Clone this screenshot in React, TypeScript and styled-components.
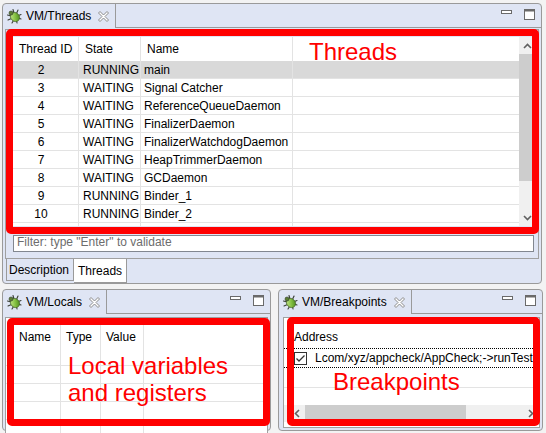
import React from "react";
import styled, { createGlobalStyle } from "styled-components";

const C = {
  lav: "#dfe5f4",
  border: "#a0a0a0",
  outer: "#9a9a9a",
  grid: "#e3e3e3",
  red: "#ff0000",
  scroll: "#f0f0f0",
  thumb: "#cdcdcd",
};

const GlobalStyle = createGlobalStyle`
  *, *::before, *::after { box-sizing: border-box; }
  html, body { margin: 0; padding: 0; }
  body {
    background: #f3f3f3;
    font-family: "Liberation Sans", Arial, sans-serif;
    font-size: 12px;
    color: #000;
  }
`;

const Page = styled.div`
  width: 546px;
  height: 433px;
  padding: 3px 3px 2px 2px;
  display: flex;
  flex-direction: column;
  gap: 5px;
  overflow: hidden;
`;

const BottomRow = styled.div`
  display: flex;
  gap: 7px;
`;

const Panel = styled.section<{ $width?: number; $height: number }>`
  position: relative;
  display: flex;
  flex-direction: column;
  height: ${(p) => p.$height}px;
  ${(p) => (p.$width ? `width: ${p.$width}px; flex: none;` : `flex: 1; min-width: 0;`)}
  background: ${C.lav};
  border: 1px solid ${C.outer};
  border-radius: 4px;
`;

const Header = styled.header`
  display: flex;
  height: 24px;
  flex: none;
`;

const Tab = styled.div`
  display: flex;
  align-items: center;
  padding: 0 6px 0 3px;
  border-right: 1px solid ${C.outer};
  border-top-left-radius: 3px;
  white-space: nowrap;
`;

const TabTitle = styled.span`
  margin: 0 7px 0 4px;
`;

const HeaderFill = styled.div`
  flex: 1;
  display: flex;
  justify-content: flex-end;
  align-items: flex-start;
  gap: 12px;
  padding: 5px 6px 0 0;
  border-bottom: 1px solid ${C.outer};
`;

const MinIcon = styled.svg`
  margin-top: 1px;
`;

const TopBody = styled.div`
  flex: 1;
  display: flex;
  flex-direction: column;
  padding-top: 1px;
`;

const ThreadsBox = styled.div`
  height: 230px;
  flex: none;
  margin: 0 2px;
  border: 1px solid ${C.border};
  background: ${C.lav};
  padding: 7px 2px 6px 0;
  display: flex;
  flex-direction: column;
`;

const TableArea = styled.div<{ $h: number }>`
  height: ${(p) => p.$h}px;
  flex: none;
  display: flex;
  background: #fff;
  overflow: hidden;
`;

const Grid = styled.div`
  flex: 1;
  min-width: 0;
  display: flex;
  flex-direction: column;
  overflow: hidden;
  background: #fff;
`;

const GridRow = styled.div<{ $cols: string; $h: number; $selected?: boolean; $line?: boolean }>`
  display: grid;
  grid-template-columns: ${(p) => p.$cols};
  height: ${(p) => p.$h}px;
  flex: none;
  background: ${(p) => (p.$selected ? "#d9d9d9" : "#fff")};
  border-bottom: ${(p) => (p.$line ? `1px solid ${C.grid}` : "none")};
`;

const Cell = styled.div<{ $center?: boolean; $pad?: number; $last?: boolean }>`
  display: flex;
  align-items: center;
  justify-content: ${(p) => (p.$center ? "center" : "flex-start")};
  padding-left: ${(p) => (p.$center ? 0 : p.$pad ?? 4)}px;
  padding-right: ${(p) => (p.$center ? 2 : 0)}px;
  border-right: ${(p) => (p.$last ? "none" : `1px solid ${C.grid}`)};
  white-space: nowrap;
  overflow: hidden;
`;

const VScroll = styled.div`
  width: 17px;
  flex: none;
  display: flex;
  flex-direction: column;
  background: ${C.scroll};
`;

const ScrollBtn = styled.div<{ $w?: number; $end?: boolean }>`
  flex: none;
  width: ${(p) => p.$w ?? 17}px;
  height: 17px;
  display: flex;
  align-items: center;
  justify-content: ${(p) => (p.$end ? "flex-end" : "center")};
  padding-right: ${(p) => (p.$end ? 5 : 0)}px;
`;

const VTrack = styled.div`
  flex: 1;
`;

const VThumb = styled.div`
  height: 127px;
  background: ${C.thumb};
`;

const Filter = styled.div`
  height: 17px;
  flex: none;
  margin: 9px 2px 0 7px;
  border: 1px solid #828790;
  background: #fff;
  color: #6d6d6d;
  padding: 0 0 4px 3px;
  display: flex;
  align-items: center;
  white-space: nowrap;
`;

const TabStrip = styled.div`
  height: 24px;
  flex: none;
  display: flex;
  align-items: flex-start;
  padding-left: 3px;
`;

const BottomTab = styled.div<{ $active?: boolean }>`
  height: ${(p) => (p.$active ? 24 : 22)}px;
  display: flex;
  align-items: center;
  padding: 0 4px 0 ${(p) => (p.$active ? 4 : 2)}px;
  background: ${(p) => (p.$active ? "#fff" : C.lav)};
  border: 1px solid ${C.outer};
  border-top: none;
  ${(p) => (p.$active ? "border-left: none;" : "")}
`;

const SmallBody = styled.div<{ $left: number }>`
  flex: 1;
  display: flex;
  flex-direction: column;
  padding: 3px 2px 2px ${(p) => p.$left}px;
`;

const WhiteBox = styled.div`
  flex: 1;
  display: flex;
  flex-direction: column;
  border: 1px solid ${C.border};
  background: #fff;
  padding-top: 7px;
  overflow: hidden;
`;

const PlainRow = styled.div<{ $dotted?: boolean; $line?: boolean }>`
  height: 20px;
  flex: none;
  display: flex;
  align-items: center;
  gap: 8px;
  padding-left: 10px;
  white-space: nowrap;
  overflow: hidden;
  border-top: ${(p) => (p.$dotted ? "1px dotted #000" : "none")};
  border-bottom: ${(p) => (p.$dotted ? "1px dotted #000" : p.$line ? `1px solid ${C.grid}` : "none")};
`;

const HeaderRow = styled.div`
  height: 23px;
  flex: none;
  display: flex;
  align-items: center;
  padding-left: 10px;
`;

const Spacer = styled.div`
  flex: 1;
`;

const HScroll = styled.div`
  height: 17px;
  flex: none;
  margin-bottom: 5px;
  display: flex;
  background: ${C.scroll};
`;

const HThumb = styled.div`
  width: 161px;
  background: ${C.thumb};
`;

const HTrack = styled.div`
  flex: 1;
`;

const Check = styled.svg`
  flex: none;
`;

const Callout = styled.div<{ $l: number; $t: number; $w: number; $h: number; $pl: number; $pt: number }>`
  position: absolute;
  left: ${(p) => p.$l}px;
  top: ${(p) => p.$t}px;
  width: ${(p) => p.$w}px;
  height: ${(p) => p.$h}px;
  border: 7px solid ${C.red};
  border-radius: 5px;
  padding: ${(p) => p.$pt}px 0 0 ${(p) => p.$pl}px;
  pointer-events: none;
`;

const CalloutLabel = styled.div`
  color: ${C.red};
  font-family: "Liberation Sans", Arial, sans-serif;
  font-size: 24px;
  line-height: 27px;
  white-space: nowrap;
`;

const BugIcon = () => (
  <svg width="16" height="16" viewBox="0 0 16 16" aria-hidden="true">
    <defs>
      <linearGradient id="bugG" x1="0" y1="0" x2="1" y2="1">
        <stop offset="0" stopColor="#d4f09a" />
        <stop offset="0.55" stopColor="#80bd3e" />
        <stop offset="1" stopColor="#3e7a1c" />
      </linearGradient>
    </defs>
    <g stroke="#3a3f36" strokeWidth="1.1" strokeLinecap="round" fill="none">
      <path d="M5 8 L1.5 7" />
      <path d="M5.5 10.5 L2 12" />
      <path d="M7.5 12.5 L6 15" />
      <path d="M8 5 L7 1.5" />
      <path d="M10.5 5.5 L12 2" />
      <path d="M12.5 7.5 L15 6.5" />
      <path d="M12.5 10 L15 11" />
      <path d="M10.5 12.5 L11 15" />
    </g>
    <ellipse cx="9" cy="9" rx="4.2" ry="4.9" transform="rotate(-45 9 9)" fill="url(#bugG)" stroke="#4a6b2a" strokeWidth="0.8" />
    <circle cx="5" cy="5" r="2" fill="#5c7d33" stroke="#2f3a28" strokeWidth="0.6" />
  </svg>
);

const CloseIcon = () => (
  <svg width="11" height="11" viewBox="0 0 11 11" aria-hidden="true">
    <path
      d="M0.5 2 L2 0.5 L5.5 4 L9 0.5 L10.5 2 L7 5.5 L10.5 9 L9 10.5 L5.5 7 L2 10.5 L0.5 9 L4 5.5 Z"
      fill="#fff"
      stroke="#8a8a8a"
      strokeWidth="1"
      strokeLinejoin="miter"
    />
  </svg>
);

const Controls = () => (
  <>
    <MinIcon width="11" height="4" viewBox="0 0 11 4" aria-hidden="true">
      <rect x="0.5" y="0.5" width="10" height="3" fill="#fff" stroke="#6a6a6a" />
    </MinIcon>
    <svg width="11" height="11" viewBox="0 0 11 11" aria-hidden="true">
      <rect x="0.5" y="0.5" width="10" height="10" fill="#fff" stroke="#6a6a6a" />
      <rect x="0.5" y="0.5" width="10" height="2" fill="#6a6a6a" />
    </svg>
  </>
);

const Chevron = ({ dir }: { dir: "up" | "down" | "left" | "right" }) => {
  const pts =
    dir === "up"
      ? "1,5 4.5,1.5 8,5"
      : dir === "down"
      ? "1,1 4.5,4.5 8,1"
      : dir === "left"
      ? "5,1 1.5,4.5 5,8"
      : "1,1 4.5,4.5 1,8";
  const w = dir === "up" || dir === "down" ? 9 : 6;
  const h = dir === "up" || dir === "down" ? 6 : 9;
  return (
    <svg width={w} height={h} viewBox={`0 0 ${w} ${h}`} aria-hidden="true">
      <polyline points={pts} fill="none" stroke="#606060" strokeWidth="1.6" />
    </svg>
  );
};

const PanelHeader = ({ title }: { title: string }) => (
  <Header>
    <Tab>
      <BugIcon />
      <TabTitle>{title}</TabTitle>
      <CloseIcon />
    </Tab>
    <HeaderFill>
      <Controls />
    </HeaderFill>
  </Header>
);

const threads: [string, string, string][] = [
  ["2", "RUNNING", "main"],
  ["3", "WAITING", "Signal Catcher"],
  ["4", "WAITING", "ReferenceQueueDaemon"],
  ["5", "WAITING", "FinalizerDaemon"],
  ["6", "WAITING", "FinalizerWatchdogDaemon"],
  ["7", "WAITING", "HeapTrimmerDaemon"],
  ["8", "WAITING", "GCDaemon"],
  ["9", "RUNNING", "Binder_1"],
  ["10", "RUNNING", "Binder_2"],
  ["", "", ""],
];

const TCOLS = "73px 62px 152px 1fr";
const LCOLS = "55px 40px 43px 1fr";

export default function App() {
  return (
    <>
      <GlobalStyle />
      <Page>
        <Panel $width={540} $height={281}>
          <PanelHeader title="VM/Threads" />
          <TopBody>
            <ThreadsBox>
              <TableArea $h={189}>
                <Grid>
                  <GridRow $cols={TCOLS} $h={24}>
                    <Cell $pad={13}>Thread ID</Cell>
                    <Cell $pad={6}>State</Cell>
                    <Cell $pad={6}>Name</Cell>
                    <Cell $last />
                  </GridRow>
                  {threads.map(([id, state, name], i) => (
                    <GridRow key={i} $cols={TCOLS} $h={18} $line $selected={i === 0}>
                      <Cell $center>{id}</Cell>
                      <Cell $pad={4}>{state}</Cell>
                      <Cell $pad={3}>{name}</Cell>
                      <Cell $last />
                    </GridRow>
                  ))}
                </Grid>
                <VScroll>
                  <ScrollBtn>
                    <Chevron dir="up" />
                  </ScrollBtn>
                  <VThumb />
                  <VTrack />
                  <ScrollBtn>
                    <Chevron dir="down" />
                  </ScrollBtn>
                </VScroll>
              </TableArea>
              <Filter>Filter: type "Enter" to validate</Filter>
            </ThreadsBox>
            <TabStrip>
              <BottomTab>Description</BottomTab>
              <BottomTab $active>Threads</BottomTab>
            </TabStrip>
          </TopBody>
          <Callout $l={3} $t={25} $w={533} $h={205} $pl={296} $pt={2}>
            <CalloutLabel>Threads</CalloutLabel>
          </Callout>
        </Panel>

        <BottomRow>
          <Panel $width={269} $height={142}>
            <PanelHeader title="VM/Locals" />
            <SmallBody $left={2}>
              <WhiteBox>
                <GridRow $cols={LCOLS} $h={23}>
                  <Cell $pad={13}>Name</Cell>
                  <Cell $pad={5}>Type</Cell>
                  <Cell $pad={5}>Value</Cell>
                  <Cell $last />
                </GridRow>
                {[0, 1, 2, 3, 4].map((i) => (
                  <GridRow key={i} $cols={LCOLS} $h={18} $line>
                    <Cell />
                    <Cell />
                    <Cell />
                    <Cell $last />
                  </GridRow>
                ))}
              </WhiteBox>
            </SmallBody>
            <Callout $l={4} $t={28} $w={263} $h={108} $pl={54} $pt={27}>
              <CalloutLabel>
                Local variables
                <br />
                and registers
              </CalloutLabel>
            </Callout>
          </Panel>

          <Panel $height={142}>
            <PanelHeader title="VM/Breakpoints" />
            <SmallBody $left={4}>
              <WhiteBox>
                <HeaderRow>Address</HeaderRow>
                <PlainRow $dotted>
                  <Check width="13" height="13" viewBox="0 0 13 13" aria-hidden="true">
                    <rect x="0.5" y="0.5" width="12" height="12" fill="#fff" stroke="#333" />
                    <polyline points="2.5,6.5 5,9 10.5,3.5" fill="none" stroke="#333" strokeWidth="1.3" />
                  </Check>
                  <span>Lcom/xyz/appcheck/AppCheck;-&gt;runTest()V</span>
                </PlainRow>
                <PlainRow $line />
                <Spacer />
                <HScroll>
                  <ScrollBtn $w={21} $end>
                    <Chevron dir="left" />
                  </ScrollBtn>
                  <HThumb />
                  <HTrack />
                  <ScrollBtn>
                    <Chevron dir="right" />
                  </ScrollBtn>
                </HScroll>
              </WhiteBox>
            </SmallBody>
            <Callout $l={8} $t={27} $w={253} $h={109} $pl={39} $pt={44}>
              <CalloutLabel>Breakpoints</CalloutLabel>
            </Callout>
          </Panel>
        </BottomRow>
      </Page>
    </>
  );
}
